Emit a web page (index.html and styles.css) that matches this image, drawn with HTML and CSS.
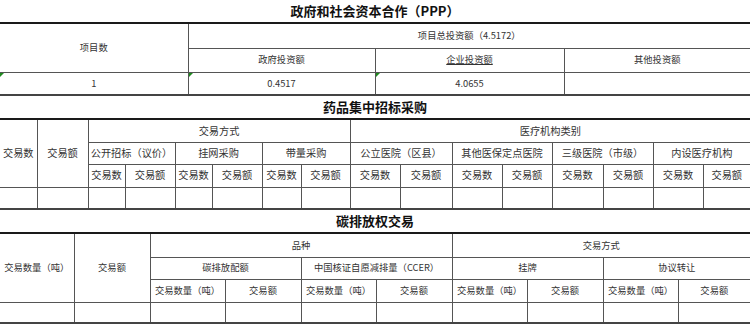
FILE: index.html
```html
<!DOCTYPE html>
<html lang="zh-CN">
<head>
<meta charset="utf-8">
<title>交易统计</title>
<link rel="stylesheet" href="styles.css">
</head>
<body>
<div class="sheet">
  <section class="block">
    <h2 class="block-title">政府和社会资本合作（PPP）</h2>
    <table class="grid grid-ppp">
      <colgroup><col class="w188"><col class="w187"><col class="w189"><col class="w186"></colgroup>
      <tr class="h24"><th rowspan="2">项目数</th><th colspan="3">项目总投资额（4.5172）</th></tr>
      <tr class="h24"><th>政府投资额</th><th><u>企业投资额</u></th><th>其他投资额</th></tr>
      <tr class="h23"><td class="flag">1</td><td class="flag">0.4517</td><td class="flag">4.0655</td><td></td></tr>
    </table>
  </section>

  <section class="block">
    <h2 class="block-title">药品集中招标采购</h2>
    <table class="grid grid-drug">
      <colgroup>
        <col class="w37"><col class="w51"><col class="w37"><col class="w50">
        <col class="w37"><col class="w50"><col class="w39"><col class="w49">
        <col class="w50"><col class="w52"><col class="w50"><col class="w50">
        <col class="w51"><col class="w50"><col class="w50"><col class="w47">
      </colgroup>
      <tr class="h22"><th rowspan="3">交易数</th><th rowspan="3">交易额</th><th colspan="6">交易方式</th><th colspan="8">医疗机构类别</th></tr>
      <tr class="h22">
        <th colspan="2">公开招标（议价）</th><th colspan="2" class="gl">挂网采购</th><th colspan="2">带量采购</th>
        <th colspan="2">公立医院（区县）</th><th colspan="2" class="gl">其他医保定点医院</th><th colspan="2" class="gl">三级医院（市级）</th><th colspan="2" class="gl">内设医疗机构</th>
      </tr>
      <tr class="h23">
        <th>交易数</th><th>交易额</th><th class="gl">交易数</th><th>交易额</th><th>交易数</th><th>交易额</th>
        <th>交易数</th><th>交易额</th><th class="gl">交易数</th><th>交易额</th><th class="gl">交易数</th><th>交易额</th><th class="gl">交易数</th><th>交易额</th>
      </tr>
      <tr class="h22">
        <td></td><td></td><td></td><td></td><td class="gl"></td><td></td><td></td><td></td>
        <td></td><td></td><td class="gl"></td><td></td><td class="gl"></td><td></td><td class="gl"></td><td></td>
      </tr>
    </table>
  </section>

  <section class="block">
    <h2 class="block-title">碳排放权交易</h2>
    <table class="grid grid-carbon">
      <colgroup>
        <col class="w74"><col class="w76"><col class="w75"><col class="w76"><col class="w75">
        <col class="w76"><col class="w75"><col class="w76"><col class="w75"><col class="w72">
      </colgroup>
      <tr class="h23"><th rowspan="3">交易数量（吨）</th><th rowspan="3">交易额</th><th colspan="4">品种</th><th colspan="4">交易方式</th></tr>
      <tr class="h22"><th colspan="2">碳排放配额</th><th colspan="2">中国核证自愿减排量（CCER）</th><th colspan="2">挂牌</th><th colspan="2">协议转让</th></tr>
      <tr class="h23"><th>交易数量（吨）</th><th>交易额</th><th>交易数量（吨）</th><th>交易额</th><th>交易数量（吨）</th><th>交易额</th><th>交易数量（吨）</th><th>交易额</th></tr>
      <tr class="h21"><td></td><td></td><td></td><td></td><td></td><td></td><td></td><td></td><td></td><td></td></tr>
    </table>
  </section>
</div>
</body>
</html>
```

FILE: styles.css
```css
* { box-sizing: border-box; }

html, body {
  margin: 0;
  padding: 0;
  background: #ffffff;
}

body {
  width: 750px;
  font-family: "Noto Sans CJK SC", "Noto Sans", sans-serif;
  color: #333333;
}

.sheet {
  display: flex;
  flex-direction: column;
}

.block-title {
  margin: 0;
  height: 24px;
  border-bottom: 2px solid #1a1a1a;
  font-size: 13px;
  font-weight: 700;
  line-height: 22px;
  text-align: center;
  color: #111111;
}

.grid {
  width: 750px;
  table-layout: fixed;
  border-collapse: collapse;
  border-top: hidden;
  border-left: hidden;
  border-right: hidden;
  border-bottom: 2px solid #444444;
}

.grid th,
.grid td {
  padding: 0;
  border: 1px solid #555555;
  font-weight: 400;
  text-align: center;
  vertical-align: middle;
  white-space: nowrap;
  overflow: hidden;
  line-height: 1;
}

.grid-ppp th,
.grid-ppp td,
.grid-carbon th,
.grid-carbon td {
  font-size: 9.3px;
}

.grid-drug th,
.grid-drug td {
  font-size: 10.2px;
}

.grid .gl {
  border-left-color: #8a8a8a;
}

/* column widths */
.w37 { width: 37px; }
.w39 { width: 39px; }
.w47 { width: 47px; }
.w49 { width: 49px; }
.w50 { width: 50px; }
.w51 { width: 51px; }
.w52 { width: 52px; }
.w72 { width: 72px; }
.w74 { width: 74px; }
.w75 { width: 75px; }
.w76 { width: 76px; }
.w186 { width: 186px; }
.w187 { width: 187px; }
.w188 { width: 188px; }
.w189 { width: 189px; }

/* row heights */
.h21 { height: 21px; }
.h22 { height: 22px; }
.h23 { height: 23px; }
.h24 { height: 24px; }

.grid u {
  text-decoration: underline;
  text-underline-offset: 1px;
}

.flag {
  position: relative;
}

.flag::before {
  content: "";
  position: absolute;
  left: 0;
  top: 0;
  width: 0;
  height: 0;
  border-top: 4px solid #1f8a1f;
  border-right: 4px solid transparent;
}
```
